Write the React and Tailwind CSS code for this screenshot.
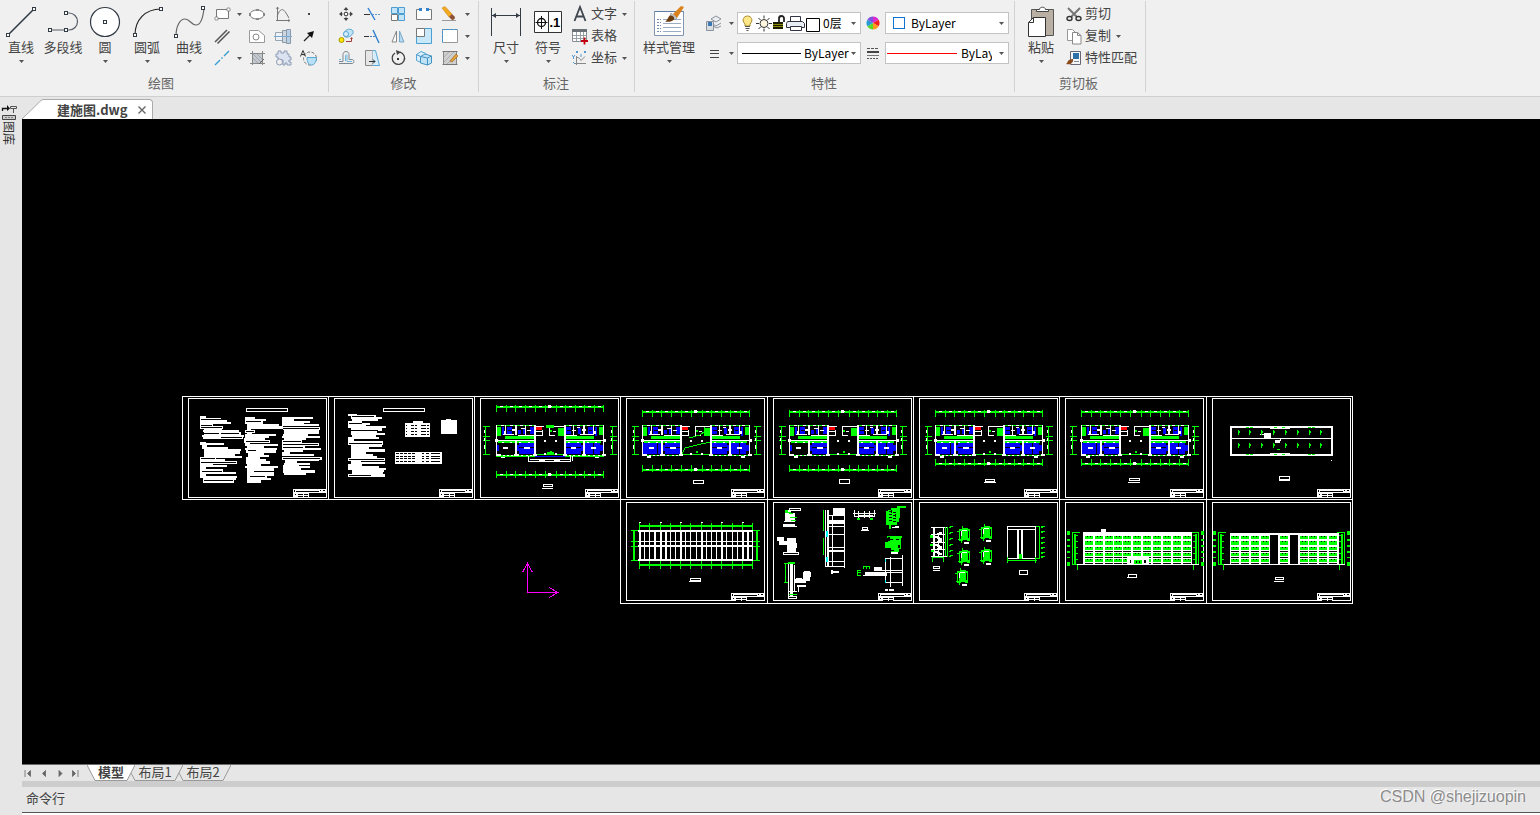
import React, { useState } from "react";

const Caret = ({ className = "" }) => (
  <svg width="5" height="3" viewBox="0 0 5 3" className={`shrink-0 ${className}`}>
    <path d="M0 0h5L2.5 3z" fill="#555" />
  </svg>
);

// small squares used as grips on the draw icons
const Grip = ({ x, y }) => (
  <rect x={x - 1.5} y={y - 1.5} width="3" height="3" fill="#fff" stroke="#333b45" />
);

const bigIcons = {
  line: (
    <>
      <path d="M3 29 29 3" stroke="#333b45" strokeWidth="1.6" />
      <Grip x={3} y={29} />
      <Grip x={29} y={3} />
    </>
  ),
  polyline: (
    <>
      <path d="M3 24h16M19 7h3a8.5 8.5 0 0 1 0 17h-3" stroke="#555d66" strokeWidth="1.2" />
      <Grip x={3} y={24} />
      <Grip x={19} y={24} />
      <Grip x={19} y={7} />
    </>
  ),
  circle: (
    <>
      <circle cx="16" cy="16" r="14.5" fill="#fff" stroke="#333b45" strokeWidth="1.2" />
      <Grip x={16} y={16} />
    </>
  ),
  arc: (
    <>
      <path d="M4 29C4 14 14 3 30 3" stroke="#222" strokeWidth="1.2" />
      <Grip x={4} y={29} />
      <Grip x={30} y={3} />
    </>
  ),
  curve: (
    <>
      <path d="M3 30C3 20 7 13 12 13s6 6 11 6c5 0 7-7 8-17" stroke="#666" strokeWidth="1.2" />
      <Grip x={3} y={30} />
      <Grip x={30} y={2} />
    </>
  ),
  dimension: (
    <>
      <path d="M1.5 2v28M30.5 2v28M2 9.500h28" stroke="#333b45" />
      <path d="M2 9.500l4-2.500v5zM30 9.500l-4-2.500v5z" fill="#333b45" />
    </>
  ),
  symbol: (
    <>
      <path d="M2.500 5.500h27v21h-27zM16.500 5.500v21" fill="#fff" stroke="#333" />
      <circle cx="9.500" cy="16.500" r="4" stroke="#111" strokeWidth="1.300" />
      <path d="M9.500 10v13M3.500 16.500h12" stroke="#111" />
      <text x="17.500" y="21" fontSize="13" fontWeight="700" fontFamily="Liberation Sans, sans-serif" fill="#000">.1</text>
    </>
  ),
  style: (
    <>
      <path d="M1.500 5.500h29v24h-29z" fill="#fff" stroke="#8195b0" />
      <path d="M1.500 5.500h29" stroke="#5f7da8" />
      <path d="M4 13.500h4M4 16.500h4M4 19.500h4M4 22.500h4M4 25.500h4" stroke="#6d87ab" strokeDasharray="2 1" />
      <path d="M10 13.500h18M10 17.500h18M10 21.500h18M10 25.500h18" stroke="#9aabc4" />
      <path d="m20 8 8-8 3 1-7 11z" fill="#d9821e" />
      <path d="m18 7 6 5-2 2-5-4z" fill="#c8ccd0" stroke="#777" strokeWidth=".5" />
      <path d="M17 9.500c3 0 5 2 4 4-2 2.500-6 2.500-9 2 3-1 2.500-4.500 5-6z" fill="#6b3c10" />
    </>
  ),
  paste: (
    <>
      <path d="M6.500 3.500h22v26h-22z" fill="#b9afa2" stroke="#555" />
      <path d="M11.500 5.500v-2h3c0-3 6-3 6 0h3v2z" fill="#fff" stroke="#444" />
      <path d="M8.500 11.500h12v19h-17v-14z" fill="#fff" stroke="#333" />
      <path d="M8.500 11.500v5h-5" stroke="#333" />
    </>
  ),
};

const smallIcons = {
  rect: (
    <>
      <path d="M3.500 4.500h12v9h-12z" fill="#fff" stroke="#777" />
      <path d="M2 12h3v3H2zM14 3h3v3h-3z" fill="#fff" stroke="#777" strokeWidth=".7" />
    </>
  ),
  ellipse: (
    <>
      <ellipse cx="9" cy="9.500" rx="7" ry="4.500" fill="#fff" stroke="#777" />
      <path d="M8 4h3v2H8zM1 8h2v3H1zM15 8h2v3h-2zM8 13h3v2H8z" fill="#888" />
    </>
  ),
  spline: (
    <>
      <path d="M3.500 2v14M2 15.500h14M3 11.500C6 3 9 3 12 8l3 5" stroke="#777" />
      <path d="m2 4 1.500-2L5 4M14 14l2 1.500-2 1.500" stroke="#777" strokeWidth=".7" />
    </>
  ),
  point: <path d="M8 8h2v2H8z" fill="#444" />,
  parallel: <path d="M2 15 14 3M4.500 16.500l12-12" stroke="#555" strokeWidth="1.500" />,
  region: (
    <>
      <path d="M1.500 3.500h9l6 5v7h-15z" fill="#fff" stroke="#999" />
      <circle cx="8" cy="10" r="3" stroke="#888" />
    </>
  ),
  bolt: (
    <>
      <path d="M1.500 5.500h7v8h-7z" fill="#eef1f5" stroke="#9aa5b2" />
      <path d="M8.500 3.500h4v12h-4z" fill="#cdd5df" stroke="#8c98a6" />
      <path d="M12.500 2.500h4v14h-4z" fill="#b7cfe4" stroke="#8c98a6" />
      <path d="M0 9.500h18" stroke="#79a8d0" />
    </>
  ),
  arrow: (
    <>
      <path d="m4 14 6-6" stroke="#222" strokeWidth="1.200" />
      <path d="m14 4-2 7-5-5z" fill="#111" />
    </>
  ),
  xline: (
    <>
      <path d="m2 16 5-5M11 7l5-5" stroke="#2f9bd4" strokeWidth="1.300" />
      <path d="m8.500 9.500 1-1" stroke="#2f9bd4" strokeWidth="1.600" />
    </>
  ),
  hatch: (
    <>
      <path d="M4 4h10v10H4z" fill="#c4c9d0" />
      <path d="M2 4.500h15M2 14.500h15M4.500 2v14M14.500 2v14" stroke="#888" />
      <path d="m5 5 8 8M5 9l5 5M9 5l5 5" stroke="#8e949c" strokeWidth=".7" />
      <path d="m11 15 5-5" stroke="#666" />
    </>
  ),
  gear: (
    <>
      <path d="M2 5h2V2h3v2h3V2h3v3h2v3h2v3h-2v2h2v3h-4v-2h-2v2h-2V11H6L4 10V8H2z" fill="#dbe3f0" stroke="#8d9bb5" />
      <circle cx="5.500" cy="13" r="3" fill="#f0f0f0" stroke="#8d9bb5" />
    </>
  ),
  textCircle: (
    <>
      <circle cx="10" cy="9.500" r="6.500" stroke="#777" strokeDasharray="3 1.500" />
      <path d="M7 8.500h9.500c0 4-2 7.500-5 7.500S7 13 7 8.500z" fill="#b7e0f7" stroke="#5da6cf" />
      <path d="M.5 7.500 3 1.500l2.500 6M1.500 5.500h3" stroke="#333" />
    </>
  ),
  move: (
    <>
      <path d="M9 3.500v3M9 11.500v3M3.500 9h3M11.500 9h3" stroke="#666" />
      <path d="m9 2 2.500 3h-5zM9 16l2.500-3h-5zM2 9l3-2.500v5zM16 9l-3-2.500v5z" fill="#444" />
      <path d="M7.500 7.500h3v3h-3z" fill="#fff" stroke="#555" />
    </>
  ),
  trim: (
    <>
      <path d="m5 3 7 12" stroke="#2d7fd0" strokeWidth="1.400" />
      <path d="M1 9.500h6" stroke="#333" />
      <path d="M9 9.500h8" stroke="#5a9cd8" strokeDasharray="2 1" />
    </>
  ),
  array: (
    <>
      <path d="M2.500 2.500h6v6h-6zM9.500 2.500h6v6h-6zM9.500 9.500h6v6h-6z" fill="#c3e4f8" stroke="#4a9fd0" />
      <path d="M2.500 9.500h6v6h-6z" fill="#fff" stroke="#777" />
    </>
  ),
  breakIcon: (
    <>
      <path d="M6 4.500H1.500v10h15v-10H12" fill="#fff" stroke="#777" />
      <path d="M4 3h3v3H4zM11 3h3v3h-3z" fill="#2d86cf" />
    </>
  ),
  erase: (
    <>
      <path d="m1 3 3-1.500L11 9l-3 3z" fill="#f3a81f" stroke="#c98b1d" strokeWidth=".6" />
      <path d="m8 12 3-3 3 3c0 2-1 3-3 3z" fill="#8d5136" />
      <path d="M1 15.500h14" stroke="#999" />
    </>
  ),
  copy: (
    <>
      <circle cx="4.500" cy="13" r="2.500" fill="#ffe600" stroke="#a89500" />
      <path d="M7 6c1-3 5-5 8-3s0 6-4 7-5-2-4-4z" fill="#bfe3f8" stroke="#58a6d3" />
      <circle cx="9" cy="7" r="2.500" fill="#d9effb" stroke="#58a6d3" />
      <path d="M9 14.500h5.500v-3" stroke="#a33b3b" />
      <path d="m13 12 1.500-2L16 12z" fill="#a33b3b" />
    </>
  ),
  extend: (
    <>
      <path d="m10 3 6 13" stroke="#2d7fd0" strokeWidth="1.400" />
      <path d="M1 9.500h5" stroke="#333" />
      <path d="M7 9.500h6" stroke="#4a7fb8" strokeDasharray="2 1" />
    </>
  ),
  mirror: (
    <>
      <path d="M7.500 4v11H3z" fill="#fff" stroke="#888" />
      <path d="M10.500 4v11H15z" fill="#b4d9f0" stroke="#7aa9c8" />
    </>
  ),
  scale: (
    <>
      <path d="M1.500 1.500h15v15h-15z" fill="#c9e8fa" stroke="#4a9fd0" />
      <path d="M1.500 1.500h8v8h-8z" fill="#fff" stroke="#777" />
    </>
  ),
  select: (
    <>
      <path d="M1.500 2.500h15v13h-15z" fill="#fff" stroke="#999" />
      <path d="M1.500 15V2.500H16" stroke="#3a93d6" strokeDasharray="3 1" />
    </>
  ),
  offset: (
    <>
      <path d="M2 12.500h4v-7c0-4 6-4 6 0v5h3c2.500 0 2.500 4 0 4H2" stroke="#7d8791" />
      <path d="M2 10.500h2M8.500 12V6.500c0-1 1.500-1 1.500 0v6h5" stroke="#6fb6dd" />
    </>
  ),
  stretch: (
    <>
      <path d="M2.500 1.500h7v15h-7z" fill="#e6e6e6" stroke="#888" />
      <path d="M9.500 1.500h3l4 15h-7" fill="#d6eefb" stroke="#58a6d3" />
      <path d="M6 12.500h6m-2-2 2 2-2 2" stroke="#333" />
    </>
  ),
  rotate: (
    <>
      <path d="M6 4a6.200 6.200 0 1 0 5-.8" stroke="#444" strokeWidth="1.300" />
      <path d="m7 1 5 2-4 3z" fill="#444" />
      <path d="M8 9h2v2H8z" fill="#333" />
    </>
  ),
  solid: (
    <>
      <path d="M1.500 5.500 6 2.500l5 2v7l-5 2-4.500-2z" fill="#d9effb" stroke="#58a6d3" />
      <path d="M5.500 7.500 10 5l6.500 2v7l-4 2-7-2z" fill="#bfe2f6" stroke="#4293c4" />
      <path d="m5.500 7.500 7 1.500v7M12.500 9l4-2M1.500 5.500l4 2" stroke="#4293c4" />
    </>
  ),
  hatchEdit: (
    <>
      <path d="M2.500 2.500h13v13h-13z" fill="#cfcfcf" stroke="#888" />
      <path d="m3 13 10-10M3 8l5-5M6 15l9-9" stroke="#a5a5a5" strokeWidth=".8" />
      <path d="M1.500 2.500h15M1.500 15.500h15" stroke="#777" />
      <path d="m9 12 6-7 2 2-6 6z" fill="#e6a532" stroke="#8d5a1c" strokeWidth=".6" />
    </>
  ),
  text: <path d="M3.500 16 9 2l5.500 14M5.500 11.500h7" stroke="#3f464e" strokeWidth="1.800" />,
  table: (
    <>
      <path d="M1.500 2.500h14v12h-14z" fill="#fff" stroke="#8a8f96" />
      <path d="M1 2h15v3H1z" fill="#6b7077" />
      <path d="M5.500 5v9M9.500 5v9M12.500 5v9M2 8.500h13M2 11.500h13" stroke="#9aa0a7" />
      <path d="M13.500 10.500v7M10 14h7" stroke="#c00010" strokeWidth="1.800" />
    </>
  ),
  coord: (
    <>
      <path d="M5.500 7v9M4 14.500h11M6 8.500c2 0 3 1 4 3l4-4" stroke="#888" />
      <path d="m5 2 2 2m0-2L5 4M13 2l2 2m0-2-2 2M1 6l1.500 2L4 6M2.500 8v2M2 13l2 2M10 5v3" stroke="#3d8fd1" strokeWidth=".9" />
    </>
  ),
  layers: (
    <>
      <path d="M6 5 11 2l5 3-5 3zM6 9l5 3 5-3M8 12l4 2 4-2" fill="#eceff2" stroke="#8a929b" />
      <path d="M1.500 7.500h7v9h-7z" fill="#d9dde2" stroke="#8a929b" />
      <path d="M3 8h4v4H3z" fill="#3c78b4" />
    </>
  ),
  lines: <path d="M5 6.500h9M5 9.500h9M5 13.500h9" stroke="#444" />,
  lineTypes: (
    <>
      <path d="M3 4.500h12" stroke="#555" strokeDasharray="3 1" />
      <path d="M3 8h12" stroke="#444" strokeWidth="2" />
      <path d="M3 11.500h12" stroke="#777" />
      <path d="M3 14.500h12" stroke="#555" strokeDasharray="2 1" />
    </>
  ),
  wheel: (
    <>
      <path d="M9 9V2.500A6.500 6.500 0 0 1 14.600 5.700z" fill="#d92bd0" />
      <path d="M9 9l5.600-3.300a6.500 6.500 0 0 1 0 6.600z" fill="#ef2020" />
      <path d="M9 9l5.600 3.300A6.500 6.500 0 0 1 9 15.500z" fill="#ff9a1c" />
      <path d="M9 9v6.500a6.500 6.500 0 0 1-5.600-3.200z" fill="#5ad82a" />
      <path d="M9 9l-5.600 3.300a6.500 6.500 0 0 1 0-6.600z" fill="#279bd5" />
      <path d="M9 9 3.400 5.700A6.500 6.500 0 0 1 9 2.500z" fill="#7d52e0" />
    </>
  ),
  cut: (
    <>
      <path d="m3 3 9 9M15 3l-9 9" stroke="#777" strokeWidth="2" />
      <ellipse cx="4.500" cy="13.500" rx="2.500" ry="2" stroke="#333" strokeWidth="1.400" />
      <ellipse cx="13.500" cy="13.500" rx="2.500" ry="2" stroke="#333" strokeWidth="1.400" />
    </>
  ),
  duplicate: (
    <>
      <path d="M2.500 2.500h5l3 3v8h-8z" fill="#fff" stroke="#999" />
      <path d="M7.500 5.500h5l3.500 3v8.500h-8.500z" fill="#fff" stroke="#888" />
      <path d="M12.500 5.500v3H16" stroke="#888" />
    </>
  ),
  match: (
    <>
      <path d="M5.500 2.500h10v13h-10z" fill="#f4f6f8" stroke="#667" />
      <path d="M8 4h6v6H8z" fill="#2d6fa8" />
      <path d="M9 12.500h5" stroke="#889" />
      <path d="M8 10c1 4-3 6-7 5 2-1 1-3 3-4s3-1 4-1z" fill="#8a4b1c" />
    </>
  ),
};

const SmallIcon = ({ name }) => (
  <svg width="18" height="18" viewBox="0 0 18 18" fill="none" className="shrink-0">
    {smallIcons[name]}
  </svg>
);

const BigButton = ({ icon, label, caret = true, className = "w-[42px]" }) => (
  <button type="button" className={`flex shrink-0 flex-col items-center pt-[3px] ${className}`}>
    <svg width="32" height="32" viewBox="0 0 32 32" fill="none">
      {bigIcons[icon]}
    </svg>
    <span className="whitespace-nowrap leading-[18px]">{label}</span>
    {caret && <Caret className="mt-1" />}
  </button>
);

const SmallButton = ({ icon, title, caret, className = "pl-1" }) => (
  <button type="button" aria-label={title} className={`flex items-center ${className}`}>
    <SmallIcon name={icon} />
    {caret && <Caret className="ml-1.5" />}
  </button>
);

const TextButton = ({ icon, label, caret }) => (
  <button type="button" className="flex h-[22px] items-center pl-0.5">
    <SmallIcon name={icon} />
    <span className="ml-0.5 pb-0.5 whitespace-nowrap leading-[18px]">{label}</span>
    {caret && <Caret className="ml-[5px]" />}
  </button>
);

const Group = ({ label, className = "", children }) => (
  <section className={`flex shrink-0 flex-col border-r border-[#d2d2d2] ${className}`}>
    <div className="flex h-[73px] items-start pt-0.5">{children}</div>
    <h2 className="text-center leading-[18px] text-[#666]">{label}</h2>
  </section>
);

const Combo = ({ title, options, className = "", children }) => (
  <label className="flex h-[22px] w-[124px] items-center border border-[#c3c3c3] bg-white pr-1 text-black">
    {children}
    <select
      aria-label={title}
      className={`min-w-0 flex-1 appearance-none overflow-hidden bg-transparent text-[12px] leading-[18px] outline-none ${className}`}
    >
      {options.map((o) => (
        <option key={o}>{o}</option>
      ))}
    </select>
    <Caret />
  </label>
);

const LayerState = () => (
  <svg width="79" height="18" viewBox="0 0 79 18" fill="none" className="ml-1 shrink-0">
    <path d="M3 10C-1 6 2 2 5.500 2S12 6 8 10v2H3z" fill="#ffe88a" stroke="#a58a2c" />
    <path d="M3 12.500h5M3.500 14.500h4M4.500 16.500h2" stroke="#555" />
    <circle cx="22" cy="9.500" r="4" fill="#fff6df" stroke="#333" />
    <path d="M22 1.500v3M22 14.500v3M14 9.500h3M27 9.500h3M16.500 4l2 2M25.500 13l2 2M27.500 4l-2 2M18.500 13l-2 2" stroke="#333" />
    <path d="M37 9V4.500a2.500 2.500 0 0 1 5 0V8" stroke="#222" strokeWidth="1.800" />
    <path d="M31 8h10v7H31z" fill="#1c1c00" />
    <path d="M31 10.500h10M31 12.500h10" stroke="#8a8a00" />
    <path d="M48.500 7.500v-5h10v5" fill="#fff" stroke="#334" />
    <path d="M45.500 7.500h15l2 2v4h-18v-4z" fill="#e9eef5" stroke="#334" />
    <path d="M48.500 12.500h11v4h-11z" fill="#fff" stroke="#334" />
    <path d="M64.500 4.500h13v13h-13z" fill="#fff" stroke="#000" />
  </svg>
);

const Ribbon = () => (
  <header className="flex shrink-0 overflow-hidden border-b border-[#cfcfcf] bg-[#f0f0f0] pt-px pb-1 text-[13px] text-[#444]">
    <Group label="绘图" className="pr-1.5">
      <BigButton icon="line" label="直线" />
      <BigButton icon="polyline" label="多段线" caret={false} />
      <BigButton icon="circle" label="圆" />
      <BigButton icon="arc" label="圆弧" />
      <BigButton icon="curve" label="曲线" />
      <div className="grid auto-rows-[22px] grid-cols-[34px_26px_26px_26px]">
        <SmallButton icon="rect" title="矩形" caret className="pl-[3px]" />
        <SmallButton icon="ellipse" title="椭圆" />
        <SmallButton icon="spline" title="函数曲线" />
        <SmallButton icon="point" title="点" />
        <SmallButton icon="parallel" title="双线" className="pl-[3px]" />
        <SmallButton icon="region" title="面域" />
        <SmallButton icon="bolt" title="螺栓" />
        <SmallButton icon="arrow" title="箭头" />
        <SmallButton icon="xline" title="构造线" caret className="pl-[3px]" />
        <SmallButton icon="hatch" title="填充" />
        <SmallButton icon="gear" title="齿轮" />
        <SmallButton icon="textCircle" title="局部放大" />
      </div>
    </Group>

    <Group label="修改" className="px-1">
      <div className="grid auto-rows-[22px] grid-cols-[26px_26px_26px_26px_37px]">
        <SmallButton icon="move" title="移动" />
        <SmallButton icon="trim" title="裁剪" />
        <SmallButton icon="array" title="阵列" />
        <SmallButton icon="breakIcon" title="打断" />
        <SmallButton icon="erase" title="删除" caret />
        <SmallButton icon="copy" title="平移复制" />
        <SmallButton icon="extend" title="延伸" />
        <SmallButton icon="mirror" title="镜像" />
        <SmallButton icon="scale" title="缩放" />
        <SmallButton icon="select" title="选择" caret />
        <SmallButton icon="offset" title="等距线" />
        <SmallButton icon="stretch" title="拉伸" />
        <SmallButton icon="rotate" title="旋转" />
        <SmallButton icon="solid" title="分解" />
        <SmallButton icon="hatchEdit" title="编辑填充" caret />
      </div>
    </Group>

    <Group label="标注" className="pl-1.5 pr-[7px]">
      <BigButton icon="dimension" label="尺寸" />
      <BigButton icon="symbol" label="符号" />
      <div className="flex flex-col">
        <TextButton icon="text" label="文字" caret />
        <TextButton icon="table" label="表格" />
        <TextButton icon="coord" label="坐标" caret />
      </div>
    </Group>

    <Group label="特性" className="pl-1 pr-[5px]">
      <BigButton icon="style" label="样式管理" className="w-[60px]" />
      <div className="grid grid-cols-[38px_124px_24px_124px] items-center gap-y-2 pt-[9px]">
        <SmallButton icon="layers" title="图层" caret className="pl-[6px]" />
        <Combo title="图层" options={["0层"]} className="ml-0.5">
          <LayerState />
        </Combo>
        <SmallButton icon="wheel" title="颜色" className="pl-[3px]" />
        <Combo title="颜色" options={["ByLayer"]} className="ml-1.5">
          <span className="ml-[7px] size-[12px] shrink-0 border border-[#0f74d1]" />
        </Combo>
        <SmallButton icon="lines" title="线宽" caret className="pl-[6px]" />
        <Combo title="线宽" options={["ByLayer"]} className="ml-[3px]">
          <span className="ml-1 h-px w-[59px] shrink-0 bg-black" />
        </Combo>
        <SmallButton icon="lineTypes" title="线型" className="pl-[3px]" />
        <Combo title="线型" options={["ByLayer"]} className="mr-[7px] ml-1">
          <span className="ml-px h-px w-[70px] shrink-0 bg-[#ff0000]" />
        </Combo>
      </div>
    </Group>

    <Group label="剪切板" className="pl-[5px] pr-2">
      <BigButton icon="paste" label="粘贴" />
      <div className="flex flex-col pl-px">
        <TextButton icon="cut" label="剪切" />
        <TextButton icon="duplicate" label="复制" caret />
        <TextButton icon="match" label="特性匹配" />
      </div>
    </Group>
  </header>
);

/* ---------- drawing ---------- */

const G = "#00ff00";
const B = "#0000ff";
const W = "#ffffff";
const K = "#000000";

// d is a list of [x, y, width, height]
const Fill = ({ c = W, d }) => (
  <path fill={c} d={d.map(([x, y, w, h]) => `M${x} ${y}h${w}v${h}h${-w}z`).join("")} />
);

const box = (x, y, w, h, t = 1) => [
  [x, y, w, t],
  [x, y + h - t, w, t],
  [x, y, t, h],
  [x + w - t, y, t, h],
];

const Sheet = ({ x, y, row = 1, w = 147, children }) => {
  const top = row === 1 ? 2 : 3;
  const tb = row === 1 ? 93 : 94;
  return (
    <g transform={`translate(${x} ${y})`}>
      <Fill d={[...box(0, 0, w, row === 1 ? 104 : 105), ...box(6, top, 139, 102 - top)]} />
      <Fill d={[[111, tb, 34, 4], [111, tb + 4, 16, 4]]} />
      <Fill
        c={K}
        d={[
          [112, tb + 1, 1, 2], [114, tb + 2, 23, 1], [138, tb + 1, 1, 1], [141, tb + 1, 2, 1],
          [113, tb + 5, 1, 1], [116, tb + 5, 5, 1], [122, tb + 5, 4, 1], [116, tb + 7, 5, 1], [122, tb + 7, 4, 1],
        ]}
      />
      {children}
    </g>
  );
};

const notes = [
  // left column
  [18, 20, 6, 2], [18, 22, 21, 2], [18, 24, 27, 2], [18, 26, 31, 2], [18, 28, 13, 2], [18, 30, 23, 3],
  [22, 33, 18, 1], [21, 34, 36, 2], [22, 36, 37, 3], [20, 39, 42, 2], [21, 41, 40, 2], [18, 46, 6, 1],
  [18, 47, 24, 2], [20, 49, 5, 2], [20, 51, 26, 2], [22, 53, 37, 2], [22, 55, 36, 3], [22, 58, 31, 2],
  [22, 60, 38, 2], [18, 61, 16, 2], [18, 63, 25, 2], [18, 65, 37, 3], [18, 68, 13, 1], [18, 69, 27, 2],
  [18, 71, 6, 2], [18, 73, 23, 3], [18, 76, 36, 2], [18, 78, 6, 2], [18, 80, 37, 2], [21, 82, 33, 2], [21, 84, 31, 3],
  // middle column
  [63, 21, 10, 2], [63, 23, 21, 2], [63, 25, 18, 3], [65, 28, 32, 2], [65, 30, 36, 3], [65, 33, 4, 1],
  [63, 34, 10, 3], [65, 36, 5, 2], [63, 38, 31, 2], [63, 40, 24, 2], [62, 42, 21, 2], [62, 44, 26, 3],
  [63, 47, 5, 1], [63, 48, 33, 2], [65, 50, 17, 2], [63, 52, 32, 2], [64, 54, 30, 3], [66, 57, 16, 2],
  [66, 59, 21, 2], [64, 61, 14, 2], [64, 63, 20, 2], [64, 65, 24, 3], [65, 68, 14, 2], [63, 70, 33, 2],
  [65, 72, 27, 3], [65, 75, 7, 1], [65, 76, 27, 4], [65, 80, 20, 2], [65, 82, 24, 2], [65, 84, 14, 3],
  // right column
  [100, 21, 31, 2], [100, 23, 12, 2], [100, 25, 28, 2], [100, 27, 22, 1], [100, 28, 37, 2], [101, 31, 37, 3],
  [102, 34, 35, 4], [101, 38, 25, 2], [100, 40, 38, 2], [102, 42, 22, 2], [100, 44, 20, 3], [100, 47, 37, 3],
  [100, 50, 23, 2], [100, 52, 39, 2], [102, 54, 19, 2], [100, 56, 8, 2], [100, 58, 32, 2], [100, 61, 40, 3],
  [103, 64, 34, 1], [103, 65, 12, 2], [102, 67, 26, 2], [101, 69, 16, 1], [101, 70, 27, 2], [101, 72, 18, 2],
  [101, 74, 32, 3], [102, 77, 22, 2],
];

const noteGaps = [
  [19, 23, 20, 1], [19, 29, 11, 1], [19, 31, 21, 1], [22, 37, 15, 1], [39, 37, 18, 1], [39, 41, 21, 1],
  [19, 62, 14, 1], [19, 66, 35, 1], [20, 75, 20, 1], [22, 84, 29, 1],
  [64, 25, 15, 1], [64, 35, 8, 1], [64, 45, 23, 1], [66, 54, 8, 1], [68, 80, 15, 1],
  [101, 32, 36, 1], [101, 45, 18, 1], [101, 48, 35, 1], [101, 51, 20, 1], [101, 62, 37, 1],
];

const schedule = [
  [20, 18, 9, 2], [23, 19, 25, 2], [23, 21, 31, 2], [24, 23, 26, 2], [20, 25, 14, 2], [20, 27, 22, 2],
  [20, 29, 18, 1], [20, 30, 38, 2], [23, 32, 31, 3], [23, 35, 26, 2], [23, 37, 34, 2], [24, 39, 24, 2],
  [20, 41, 31, 2], [20, 43, 6, 2], [20, 45, 35, 4], [23, 49, 31, 2], [23, 51, 18, 2], [23, 53, 34, 3],
  [23, 56, 15, 2], [23, 58, 22, 2], [23, 60, 26, 2], [20, 62, 37, 3], [23, 65, 10, 1], [23, 66, 34, 2],
  [20, 68, 14, 2], [20, 70, 31, 2], [20, 72, 38, 2], [24, 74, 32, 2], [24, 76, 31, 2], [20, 78, 37, 3],
];

const ticks = [22, 32, 41, 51, 61, 71, 82, 91, 101, 110, 120, 129];

// horizontal dimension chain
const Chain = ({ y, line, h }) => (
  <>
    <Fill c={G} d={[[22, line, 108, 2], ...ticks.map((t) => [t, y, 1, h])]} />
    <Fill d={[...ticks.slice(0, -1).map((t) => [t + 4, line, 3, 1]), [74, line - 1, 3, 3]]} />
  </>
);

const SideChain = ({ x }) => (
  <>
    <Fill c={G} d={[[x + 2, 30, 1, 29], [x, 30, 7, 1], [x, 40, 7, 1], [x, 44, 7, 1], [x, 58, 7, 1]]} />
    <Fill d={[[x + 1, 34, 1, 3], [x + 1, 42, 1, 3], [x + 1, 49, 1, 4]]} />
  </>
);

const leftRooms = [[23, 47, 18, 11], [45, 47, 15, 11]];

const Plan = ({ topY, topLine, bottomY, bottomLine, sides, title, rooms = leftRooms, children }) => (
  <>
    <Chain y={topY} line={topLine} h={7} />
    <Chain y={bottomY} line={bottomLine} h={7} />
    <SideChain x={sides[0]} />
    <SideChain x={sides[1]} />
    {/* furniture */}
    <Fill
      c={B}
      d={[
        [28, 31, 2, 8], [33, 31, 5, 7], [44, 34, 3, 4], [49, 32, 2, 6], [56, 31, 5, 7],
        [92, 31, 5, 7], [104, 32, 3, 6], [114, 31, 5, 7], [121, 31, 2, 9],
        ...rooms, [92, 47, 15, 11], [111, 46, 15, 12], [22, 49, 3, 6], [42, 49, 3, 6], [107, 49, 2, 6], [126, 49, 3, 6],
      ]}
    />
    <Fill c={K} d={[[45, 51, 15, 1], [92, 51, 15, 1], [34, 34, 4, 1], [93, 34, 4, 1], [115, 34, 3, 1], [119, 46, 1, 12], [37, 47, 1, 11]]} />
    {/* planting and corridor */}
    <Fill
      c={G}
      d={[
        [22, 29, 39, 1], [90, 29, 40, 1], [23, 31, 4, 9], [84, 32, 7, 8], [125, 31, 5, 8], [31, 40, 30, 3],
        [90, 40, 30, 3], [24, 45, 37, 2], [90, 45, 37, 2], [60, 58, 31, 1], [22, 59, 39, 1], [90, 59, 40, 1],
        [75, 34, 3, 2], [76, 55, 2, 2],
      ]}
    />
    {/* walls */}
    <Fill
      d={[
        [22, 29, 1, 30], [129, 29, 1, 30], [60, 29, 2, 30], [90, 29, 2, 30],
        [31, 29, 1, 10], [41, 29, 2, 10], [51, 29, 1, 10], [99, 29, 1, 10], [109, 29, 2, 10], [119, 29, 1, 10],
        [41, 45, 2, 14], [109, 45, 2, 14], [22, 44, 40, 1], [90, 44, 40, 1],
        [29, 38, 11, 1], [44, 39, 16, 1], [92, 39, 11, 1], [106, 38, 13, 1],
        [38, 33, 4, 2], [53, 34, 4, 1], [98, 34, 4, 1], [108, 33, 4, 2], [30, 35, 2, 3], [47, 32, 4, 1],
        [103, 31, 3, 1], [120, 35, 2, 3],
        [62, 35, 7, 1], [62, 39, 7, 1], [68, 34, 1, 6], [62, 30, 8, 1], [75, 30, 1, 10], [76, 30, 14, 1],
        [76, 39, 5, 1], [70, 44, 2, 2], [81, 44, 2, 2], [70, 57, 2, 2], [81, 57, 2, 2], [79, 35, 3, 1],
        [22, 58, 5, 2], [40, 58, 5, 2], [59, 58, 4, 2], [89, 58, 4, 2], [108, 58, 4, 2], [128, 58, 4, 2],
        [21, 43, 3, 3], [129, 43, 3, 3],
        [29, 51, 5, 2], [50, 51, 6, 2], [97, 51, 5, 2], [117, 51, 5, 2], [27, 60, 4, 2], [121, 60, 4, 2],
        ...[25, 29, 33, 37, 47, 52, 56, 95, 99, 104, 114, 119, 124].map((x) => [x, 59, 2, 1]),
        ...[27, 36, 46, 55, 95, 103, 113, 122].map((x) => [x, 29, 3, 1]),
        ...[28, 36, 45, 54, 94, 103, 113, 121].map((x) => [x, 46, 2, 1]),
      ]}
    />
    <Fill c="#ff0000" d={[[62, 31, 6, 3]]} />
    <Fill d={title} />
    {children}
  </>
);

const gridX = Array.from({ length: 23 }, (_, i) => Math.round(19 + i * 5.14));

const Framing = () => (
  <>
    <Fill
      c={G}
      d={[
        [19, 26, 114, 2], [19, 65, 114, 2], [13, 31, 2, 30], [136, 31, 2, 30],
        ...gridX.filter((_, i) => i % 2 === 0).flatMap((x) => [[x, 24, 1, 7], [x, 62, 1, 8]]),
        ...[31, 42, 47, 61].flatMap((y) => [[11, y, 8, 1], [133, y, 7, 1]]),
      ]}
    />
    <Fill
      d={[
        [18, 31, 115, 2], [18, 42, 115, 1], [18, 46, 115, 2], [18, 60, 115, 2],
        ...gridX.map((x, i) => [x, 31, i % 4 === 0 || i === 3 || i === 5 || i === 21 ? 2 : 1, 31]),
        ...gridX.filter((_, i) => i % 4 === 0).map((x) => [x, 23, 2, 1]),
        ...box(70, 79, 11, 3), [69, 82, 12, 1],
      ]}
    />
  </>
);

const Details = () => (
  <>
    <Fill
      c={G}
      d={[
        [18, 11, 6, 3], [56, 11, 1, 21], [56, 39, 1, 17], [18, 64, 1, 19], [17, 64, 4, 1], [17, 83, 4, 1],
        [121, 9, 11, 17], [130, 7, 3, 12], [132, 7, 7, 2], [119, 12, 2, 14], [122, 26, 2, 4],
        [121, 38, 13, 15], [118, 43, 4, 6], [120, 37, 15, 2],
        [90, 71, 4, 1], [90, 73, 4, 1], [90, 76, 4, 1], [90, 71, 1, 6],
        [96, 67, 7, 1], [96, 67, 1, 3], [99, 67, 1, 3], [102, 67, 1, 3],
      ]}
    />
    <Fill
      c={K}
      d={[
        ...[12, 15, 18, 21].flatMap((y) => [[122, y, 3, 1], [126, y + 1, 3, 1]]),
        [124, 11, 1, 3], [128, 15, 1, 3], [123, 40, 3, 1], [129, 40, 3, 1], [131, 46, 2, 3], [124, 51, 3, 1],
        [121, 49, 3, 4], [132, 50, 2, 3], [121, 38, 2, 4], [130, 23, 2, 3], [121, 9, 3, 2],
      ]}
    />
    <Fill
      d={[
        ...box(22, 9, 12, 3), [21, 11, 3, 2], [18, 14, 10, 9], [17, 22, 11, 1], [16, 25, 12, 3], [28, 27, 2, 1],
        [10, 38, 7, 4], [12, 42, 8, 4], [20, 39, 9, 15], [28, 44, 2, 5], [16, 53, 16, 3],
        [21, 63, 1, 34], [23, 63, 3, 34], [27, 66, 1, 26], [36, 73, 7, 8], [37, 72, 6, 10], [43, 73, 1, 5],
        [27, 80, 12, 4], [29, 79, 6, 2], [30, 86, 9, 2], [31, 88, 1, 5], [21, 92, 9, 1], [21, 97, 9, 3],
        [58, 11, 1, 57], [60, 11, 2, 57], [77, 9, 1, 60], [66, 9, 11, 8], [65, 17, 1, 50],
        [61, 16, 16, 1], [61, 21, 17, 4], [61, 27, 17, 1], [61, 35, 17, 1], [61, 48, 17, 1], [61, 51, 17, 2],
        [61, 62, 17, 1], [58, 67, 20, 1], [64, 72, 8, 2], [64, 71, 2, 4],
        [86, 14, 23, 1], [87, 11, 1, 7], [91, 12, 1, 7], [97, 12, 1, 7], [102, 12, 1, 7], [107, 11, 1, 7],
        [88, 17, 20, 1], [92, 16, 14, 1], ...box(95, 28, 6, 3), [94, 31, 8, 1], [128, 27, 4, 2], [125, 28, 3, 1],
        [124, 53, 7, 2], [98, 73, 12, 3], [96, 76, 24, 1], [107, 68, 8, 4], [110, 71, 26, 1], [107, 73, 29, 1],
        [110, 74, 10, 2], [118, 59, 1, 24], [119, 59, 17, 1], [119, 83, 17, 1], [123, 58, 1, 30], [135, 56, 1, 31],
        [122, 90, 5, 2], [118, 90, 3, 2],
      ]}
    />
    <Fill c={G} d={[[23, 18, 7, 1], [24, 21, 5, 1], [22, 14, 4, 1], [21, 63, 7, 2], [22, 95, 8, 1], [90, 19, 3, 2], [103, 19, 3, 2]]} />
    <Fill c="#00ffff" d={[[59, 32, 2, 6], [59, 58, 2, 5], [118, 60, 1, 3], [118, 81, 1, 3]]} />
    <Fill c={K} d={[[17, 54, 14, 1], [22, 98, 7, 1]]} />
  </>
);

// small green column details, placed by their centre
const nodes = [[51, 36], [73, 34], [51, 58], [73, 57], [49, 78]];

const Stairs = () => (
  <>
    <Fill
      d={[
        [18, 28, 16, 1], [18, 57, 16, 1], [20, 28, 1, 30], [21, 28, 1, 30], [25, 34, 1, 24], [30, 28, 1, 30],
        [18, 35, 14, 1], [18, 43, 14, 1], [18, 50, 14, 1],
        ...[37, 45, 52].flatMap((y) => [[22, y, 3, 2], [24, y + 1, 3, 2], [26, y + 2, 3, 2]]),
        ...[33, 41, 48].flatMap((y) => [[26, y, 3, 2], [24, y + 1, 2, 1]]),
        ...box(20, 67, 7, 3), [20, 71, 7, 1],
        ...box(94, 27, 29, 33), [94, 30, 29, 1], [104, 30, 2, 30], [108, 30, 2, 30], ...box(106, 71, 9, 5),
      ]}
    />
    <Fill
      c={G}
      d={[
        [32, 28, 1, 29], [34, 28, 1, 30], [17, 36, 3, 3], [17, 45, 3, 2], [18, 51, 3, 2], [19, 58, 12, 1],
        [19, 58, 1, 5], [30, 58, 1, 5],
        ...[27, 33, 39, 45, 51, 56].flatMap((y) => [[37, y, 3, 1], [36, y + 1, 2, 1]]),
        [106, 55, 3, 5], [126, 27, 1, 33], [123, 27, 3, 1], [123, 59, 3, 1], [94, 61, 30, 1], [94, 58, 1, 6], [122, 58, 1, 6],
        ...[27, 32, 38, 43, 48, 53, 57].flatMap((y) => [[128, y, 4, 1], [128, y + 1, 2, 1]]),
      ]}
    />
    {nodes.map(([x, y]) => (
      <g key={`${x}-${y}`}>
        <Fill c={G} d={[[x - 5, y - 6, 11, 12], [x - 7, y - 4, 3, 1], [x - 6, y + 4, 3, 1], [x - 2, y - 9, 1, 4], [x - 1, y - 7, 5, 2], [x - 3, y + 6, 1, 2]]} />
        <Fill c={K} d={[[x - 4, y - 4, 1, 8], [x - 1, y + 5, 4, 2], [x + 4, y - 4, 1, 7]]} />
        <Fill d={[[x - 2, y - 5, 5, 1], [x - 3, y - 4, 1, 5], [x, y + 7, 5, 2]]} />
      </g>
    ))}
  </>
);

const floors = [[37, 3], [42, 4], [48, 3], [54, 3], [60, 3]];

const Levels = ({ x, flip }) => (
  <g transform={flip ? `translate(${x} 0) scale(-1 1)` : `translate(${x} 0)`}>
    <Fill
      c={G}
      d={[
        [0, 32, 3, 4], [0, 40, 3, 2], [0, 46, 3, 2], [0, 52, 3, 2], [0, 58, 3, 1], [0, 63, 3, 4],
        [5, 33, 8, 1], [5, 33, 1, 33], [7, 35, 2, 30], [9, 36, 2, 1], [9, 42, 2, 1], [9, 48, 2, 1],
        [9, 54, 2, 1], [9, 60, 2, 1], [5, 65, 6, 1], [10, 66, 1, 5],
      ]}
    />
  </g>
);

const Windows = ({ xs }) => (
  <>
    <Fill c={G} d={xs.flatMap((x) => floors.map(([y, h]) => [x, y, 8, h]))} />
    <Fill
      c={K}
      d={xs.flatMap((x) =>
        floors.flatMap(([y]) => [[x + 2, y, 1, 1], [x + 5, y, 1, 1], ...(y > 47 ? [[x, y + 4, 8, 1]] : [])])
      )}
    />
  </>
);

const Drawing = () => (
  <svg
    width="1518"
    height="645"
    viewBox="22 119 1518 645"
    shapeRendering="crispEdges"
    fill="none"
    role="img"
    aria-label="建施图"
    className="block shrink-0"
  >
    <Sheet x={182} y={396}>
      <Fill d={[...box(64, 12, 42, 4), ...notes]} />
      <Fill c={K} d={noteGaps} />
    </Sheet>

    <Sheet x={328} y={396}>
      <Fill d={[...box(55, 12, 42, 4), ...schedule, [77, 27, 25, 14], [85, 25, 10, 2], [113, 24, 16, 14], [118, 23, 5, 1], [67, 56, 47, 12]]} />
      <Fill
        c={K}
        d={[
          [24, 20, 22, 1], [21, 27, 13, 1], [21, 34, 29, 1], [21, 47, 33, 1], [21, 63, 35, 1], [21, 79, 22, 1],
          ...[29, 32, 35, 38].flatMap((y) => [[78, y, 1, 1], [83, y, 3, 1], [87, y, 2, 1], [93, y, 5, 1], [99, y, 2, 1]]),
          ...[57, 60, 62, 65].flatMap((y) => [[68, y, 3, 1], [72, y, 3, 1], [76, y, 3, 1], [80, y, 3, 1], [84, y, 3, 1], [94, y, 2, 1], [98, y, 3, 1], [103, y, 9, 1]]),
        ]}
      />
    </Sheet>

    <Sheet x={474} y={396}>
      <Plan
        topY={9} topLine={10} bottomY={75} bottomLine={78} sides={[9, 136]}
        rooms={[[45, 47, 15, 11]]}
        title={[...box(69, 88, 10, 3), [68, 92, 11, 1]]}
      >
        <Fill c={G} d={[[72, 29, 8, 3], [73, 56, 7, 3], [22, 60, 39, 1], [90, 60, 40, 1]]} />
        <Fill c={B} d={[[61, 60, 30, 1]]} />
        <Fill d={[[54, 60, 1, 6], [54, 65, 43, 1], [56, 63, 40, 1], [96, 60, 1, 6], [98, 60, 1, 5], [65, 63, 6, 2], [80, 63, 6, 2]]} />
      </Plan>
    </Sheet>

    <Sheet x={620} y={396} w={148}>
      <Plan topY={14} topLine={15} bottomY={69} bottomLine={73} sides={[12, 134]} title={box(73, 84, 11, 4)}>
        <path d="M62 58l3-6 12-3 13-3M69 42l11-3 4-3 1-5" stroke={G} />
      </Plan>
    </Sheet>

    <Sheet x={767} y={396}>
      <Plan
        topY={14} topLine={15} bottomY={69} bottomLine={73} sides={[12, 133]}
        rooms={[[45, 47, 15, 11]]}
        title={box(72, 83, 11, 5)}
      />
    </Sheet>

    <Sheet x={913} y={396}>
      <Plan topY={14} topLine={15} bottomY={63} bottomLine={67} sides={[12, 133]} title={[...box(72, 83, 10, 3), [71, 86, 12, 1]]} />
    </Sheet>

    <Sheet x={1059} y={396} w={148}>
      <Plan topY={14} topLine={15} bottomY={63} bottomLine={67} sides={[11, 133]} title={[...box(70, 82, 11, 3), [69, 86, 12, 1]]} />
    </Sheet>

    <Sheet x={1206} y={396}>
      <Fill
        d={[
          ...box(24, 30, 103, 30, 2), [24, 42, 103, 1], [58, 37, 7, 5], [54, 38, 5, 1], [69, 44, 5, 3], [74, 43, 1, 2],
          ...box(73, 80, 11, 5), [73, 83, 11, 2], [64, 32, 20, 1], [64, 57, 20, 1], [125, 64, 1, 1],
        ]}
      />
      <Fill
        c={G}
        d={[
          ...[32, 43, 55, 67, 79, 91, 103, 114].flatMap((x) => [[x, 34, 1, 5], [x + 1, 35, 1, 2], [x, 47, 1, 5], [x + 1, 48, 1, 2]]),
          ...[40, 44, 68, 76, 102, 106].flatMap((x) => [[x, 31, 3, 1], [x, 58, 3, 1]]),
          [71, 53, 3, 1],
        ]}
      />
    </Sheet>

    <Sheet x={620} y={499} row={2} w={148}>
      <Framing />
    </Sheet>

    <Sheet x={767} y={499} row={2}>
      <Details />
    </Sheet>

    <Sheet x={913} y={499} row={2}>
      <Stairs />
    </Sheet>

    <Sheet x={1059} y={499} row={2} w={148}>
      <Levels x={8} />
      <Levels x={145} flip />
      <Fill d={[[24, 33, 109, 32], [42, 30, 5, 3], [18, 65, 122, 1], ...box(69, 75, 9, 4), [68, 78, 10, 1]]} />
      <Windows xs={[26, 36, 46, 55, 64, 74, 84, 94, 104, 114, 124]} />
      <Fill d={[[68, 58, 22, 7]]} />
      <Fill c={G} d={[[75, 61, 8, 4]]} />
      <Fill c={K} d={[[71, 61, 1, 3], [77, 62, 1, 2], [80, 62, 1, 2], [85, 61, 2, 3]]} />
    </Sheet>

    <Sheet x={1206} y={499} row={2}>
      <Levels x={7} />
      <Levels x={144} flip />
      <Fill d={[[24, 34, 109, 31], [18, 65, 121, 1], ...box(69, 78, 9, 3), [68, 82, 10, 1]]} />
      <Fill c={K} d={[[64, 36, 8, 29], [84, 36, 8, 29]]} />
      <Windows xs={[25, 35, 45, 55, 74, 94, 103, 113, 123]} />
    </Sheet>

    {/* UCS axes */}
    <path
      d="M527.5 563v29.500h31M522.500 572.500l5-9.500 5 9.500M549 587.500l9 5-9 5"
      stroke="#ff00ff"
    />
  </svg>
);

/* ---------- window parts ---------- */

const SideRail = () => (
  <aside className="flex w-[22px] shrink-0 flex-col items-center pt-2 pr-1">
    <button type="button" className="flex flex-col items-center text-[12px] leading-[14px] text-[#333]">
      <svg width="16" height="16" viewBox="0 0 16 16" fill="none">
        <path d="M1.500 6V3.500h5" stroke="#111" strokeWidth="1.300" />
        <path d="m6 0 3 3.500L6 6z" fill="#111" />
        <path d="M9.500 1.500h6v2h-6zM12.500 3v5" stroke="#555" />
        <path d="M1.500 10.500h13v4h-13z" stroke="#444" fill="#ccc" />
        <path d="M4.500 12.500h1m2 0h1m2 0h1" stroke="#333" />
      </svg>
      <span className="[text-orientation:sideways] [writing-mode:vertical-rl]">图库</span>
    </button>
  </aside>
);

const FileTab = () => (
  <div className="flex h-[22px] shrink-0 items-end">
    <svg width="21" height="20" viewBox="0 0 21 20" fill="none">
      <path d="M0 20 19 1.500 21 .5V20z" fill="#fff" />
      <path d="M0 20 19 1.500 21 .5" stroke="#aaa" />
    </svg>
    <div className="flex h-5 items-center rounded-tr-sm border-t border-r border-[#aaa] bg-white pr-1 pl-3.5 text-[13px] text-[#444]">
      <button type="button" className="font-bold whitespace-nowrap">建施图.dwg</button>
      <button type="button" aria-label="关闭" className="ml-2 flex size-3 items-center justify-center">
        <svg width="8" height="8" viewBox="0 0 8 8">
          <path d="m.5.5 7 7m0-7-7 7" stroke="#666" strokeWidth="1.400" />
        </svg>
      </button>
    </div>
  </div>
);

const arrows = [
  ["第一个", "M1 1v7M6.500 1.500v6l-3-3z"],
  ["上一个", "M5.500 1.500v6l-3-3z"],
  ["下一个", "M3 1.500v6l3-3z"],
  ["最后一个", "M1.500 1.500v6l3-3zM7 1v7"],
];

const tabs = ["模型", "布局1", "布局2"];

const LayoutTabs = () => {
  const [active, setActive] = useState("模型");
  return (
    <nav className="flex h-[17px] shrink-0 border-t border-[#6a6a6a] text-[13px] text-[#444]">
      <div className="flex w-[65px] items-center pl-0.5">
        {arrows.map(([title, d]) => (
          <button type="button" key={title} aria-label={title} className="w-4">
            <svg width="8" height="9" viewBox="0 0 8 9">
              <path d={d} fill="#666" stroke="#666" strokeWidth=".8" />
            </svg>
          </button>
        ))}
      </div>
      <svg width="8" height="16" viewBox="0 0 8 16">
        <path d="M0 0h8v16z" fill={active === tabs[0] ? "#fff" : "none"} />
        <path d="m0 0 8 15.500" stroke="#999" />
      </svg>
      {tabs.map((tab, i) => (
        <React.Fragment key={tab}>
          <button
            type="button"
            onClick={() => setActive(tab)}
            className={`flex items-start justify-center border-b border-[#999] whitespace-nowrap leading-[13px] ${
              i === 0 ? "w-8" : "w-10"
            } ${active === tab ? "bg-white font-bold" : ""}`}
          >
            {tab}
          </button>
          <svg width="8" height="16" viewBox="0 0 8 16" fill="none">
            {active === tab && <path d="M0 0h8L0 16z" fill="#fff" />}
            <path d="M8 0 0 15.500" stroke="#999" />
            {i < tabs.length - 1 && <path d="m4 8 4 7.500" stroke="#999" />}
          </svg>
        </React.Fragment>
      ))}
    </nav>
  );
};

const App = () => {
  return (
    <div className="relative flex h-screen flex-col overflow-hidden bg-[#e6e6e6] font-['Noto_Sans_CJK_SC',sans-serif]">
      <Ribbon />
      <div className="flex min-h-0 flex-1">
        <SideRail />
        <main className="flex min-w-0 flex-1 flex-col">
          <FileTab />
          <div className="min-h-0 flex-1 overflow-hidden bg-black">
            <Drawing />
          </div>
          <LayoutTabs />
          <div className="h-1.5 shrink-0 bg-[#cdcdcd]" />
          <label htmlFor="command" className="block pt-px pb-[5px] pl-1 text-[13px] leading-[19px] text-[#444]">
            命令行
          </label>
          <input id="command" className="block h-[3px] w-full shrink-0 border-t border-[#555] bg-white outline-none" />
        </main>
      </div>
      <p className="absolute right-3.5 bottom-2 font-['Liberation_Sans',sans-serif] text-[16px] leading-5 text-[#8c8c8c] [text-shadow:-1px_-1px_0_#fff]">
        CSDN @shejizuopin
      </p>
    </div>
  );
};

export default App;
